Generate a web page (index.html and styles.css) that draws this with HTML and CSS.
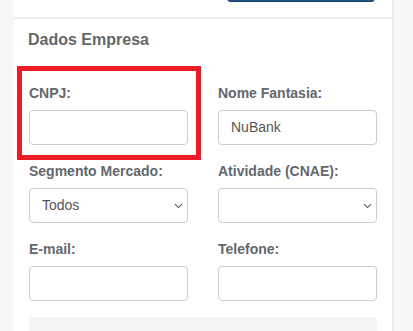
FILE: index.html
```html
<!DOCTYPE html>
<html lang="pt-br">
<head>
    <meta charset="UTF-8">
    <meta name="viewport" content="width=device-width, initial-scale=1.0">
    <title>Dados Empresa</title>
    <link rel="stylesheet" href="styles.css">
</head>
<body>

    <div class="painel">
        <!-- topo do painel, so aparece a base do botao -->
        <div class="painel-topo">
            <button class="btn-salvar" type="button" aria-label="Salvar"></button>
        </div>

        <div class="painel-corpo">
            <h2 class="titulo">Dados Empresa</h2>

            <!-- destaque vermelho em volta do CNPJ -->
            <div class="destaque"></div>

            <div class="grade">
                <div class="campo">
                    <label for="cnpj">CNPJ:</label>
                    <input type="text" id="cnpj">
                </div>
                <div class="campo">
                    <label for="fantasia">Nome Fantasia:</label>
                    <input type="text" id="fantasia" value="NuBank">
                </div>

                <div class="campo">
                    <label for="segmento">Segmento Mercado:</label>
                    <div class="select-caixa">
                        <select id="segmento">
                            <option>Todos</option>
                        </select>
                        <svg class="seta" width="9" height="6" viewBox="0 0 9 6"><path d="M1 1.2 L4.5 4.6 L8 1.2" fill="none" stroke="#555" stroke-width="1.1"/></svg>
                    </div>
                </div>
                <div class="campo">
                    <label for="cnae">Atividade (CNAE):</label>
                    <div class="select-caixa">
                        <select id="cnae">
                            <option></option>
                        </select>
                        <svg class="seta" width="9" height="6" viewBox="0 0 9 6"><path d="M1 1.2 L4.5 4.6 L8 1.2" fill="none" stroke="#555" stroke-width="1.1"/></svg>
                    </div>
                </div>

                <div class="campo">
                    <label for="email">E-mail:</label>
                    <input type="text" id="email">
                </div>
                <div class="campo">
                    <label for="telefone">Telefone:</label>
                    <input type="text" id="telefone">
                </div>
            </div>

            <div class="rodape-cinza"></div>
        </div>
    </div>

</body>
</html>
```

FILE: styles.css
```css
body {
    margin: 0;
    background-color: #f7f7f7;
    font-family: "Liberation Sans", Arial, sans-serif;
    height: 331px;
    overflow: hidden;
}
.painel {
    margin-left: 14px;
    width: 378px;
    background-color: #fff;
    border-right: 2px solid #ebebeb;
    min-height: 331px;
}
.painel-topo {
    height: 17px;
    display: flex;
    justify-content: flex-end;
    align-items: flex-end;
    padding-right: 17px;
    border-bottom: 2px solid #ededed;
    overflow: hidden;
}
.btn-salvar {
    width: 148px;
    height: 30px;
    margin-bottom: 15px;
    border: none;
    border-bottom: 1px solid #173f66;
    border-radius: 4px;
    background-color: #22548a;
}
.painel-corpo {
    position: relative;
    padding: 12px 15px 0 15px;
}
.titulo {
    margin: 0 0 33.5px -1px;
    font-size: 16px;
    line-height: 18px;
    font-weight: bold;
    color: #62676c;
}
.destaque {
    position: absolute;
    left: 3px;
    top: 47px;
    width: 174px;
    height: 84px;
    border: 5px solid #ed1c24;
}
.grade {
    display: grid;
    grid-template-columns: 159px 159px;
    column-gap: 30px;
}
.campo {
    display: flex;
    flex-direction: column;
    margin-bottom: 16px;
}
.campo label {
    font-size: 14px;
    line-height: 20px;
    font-weight: bold;
    color: #63686d;
    margin-bottom: 7px;
}
.campo input,
.campo select {
    box-sizing: border-box;
    width: 100%;
    height: 35px;
    padding: 0 12px;
    border: 1px solid #cccccc;
    border-radius: 4px;
    background-color: #fff;
    font-family: "Liberation Sans", Arial, sans-serif;
    font-size: 14px;
    color: #555;
    outline: none;
}
.campo select {
    -webkit-appearance: none;
    appearance: none;
}
.select-caixa {
    position: relative;
}
.seta {
    position: absolute;
    right: 5px;
    top: 15px;
}
.rodape-cinza {
    height: 30px;
    background-color: #f4f4f4;
    border-radius: 4px;
}
```
